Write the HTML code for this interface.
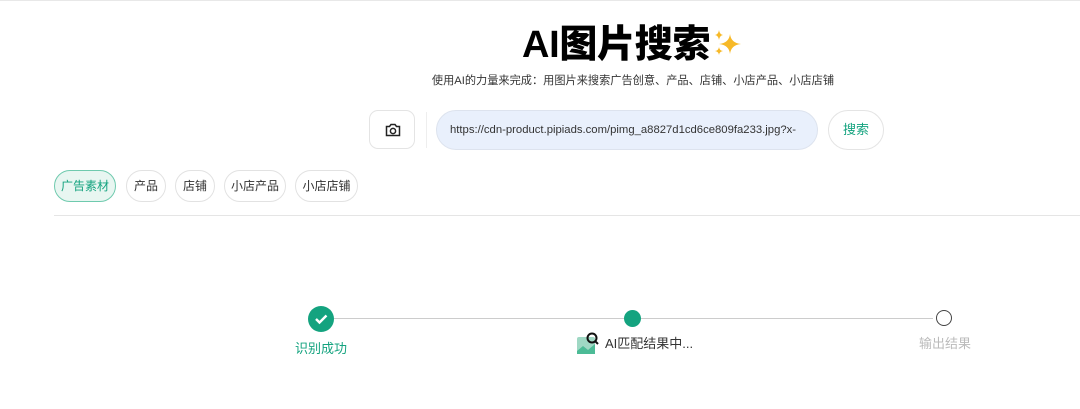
<!DOCTYPE html>
<html><head><meta charset="utf-8"><style>
body{margin:0;width:1080px;height:409px;background:#fff;font-family:"Liberation Sans","Noto Sans CJK SC",sans-serif;position:relative;overflow:hidden}
.a{position:absolute}
.topline{left:0;top:0;width:1080px;height:1px;background:#e8e8e8}
h1{position:absolute;left:522px;top:22px;margin:0;font-size:38px;font-weight:900;line-height:46px;color:#000;letter-spacing:-0.3px}
.sub{left:0;width:1266px;top:72px;text-align:center;font-size:11.2px;color:#333}
.cam{left:369px;top:110px;width:46px;height:39px;border:1px solid #e4e4e4;border-radius:9px;box-sizing:border-box}
.sep{left:426px;top:112px;width:1px;height:36px;background:#eee}
.inp{left:436px;top:110px;width:382px;height:40px;border:1px solid #dde3ee;background:#e9f0fc;border-radius:20px;box-sizing:border-box;font-size:11.3px;color:#333;line-height:38px;padding-left:13px;white-space:nowrap;overflow:hidden}
.inp span{display:block;width:346px;overflow:hidden;white-space:nowrap}
.btn{left:828px;top:110px;width:56px;height:40px;border:1px solid #e4e4e4;border-radius:20px;box-sizing:border-box;font-size:13px;color:#14a37f;text-align:center;line-height:38px}
.tag{top:170px;height:32px;border:1px solid #e2e2e2;border-radius:16px;box-sizing:border-box;font-size:12px;color:#333;line-height:30px;text-align:center}
.hr{left:54px;top:215px;width:1026px;height:1px;background:#e5e5e5}
.line{top:318px;height:1px;background:#ccc}
</style></head><body>
<div class="a topline"></div>
<h1>AI图片搜索</h1>
<svg class="a" style="left:710px;top:26px" width="34" height="34" viewBox="0 0 34 34"><path d="M20 8 Q21 17 31 18 Q21 19 20 28 Q19 19 9 18 Q19 17 20 8Z" fill="#f7b928"/><path d="M9 4 Q9.6 8.4 13 9 Q9.6 9.6 9 14 Q8.4 9.6 5 9 Q8.4 8.4 9 4Z" fill="#f7b928"/><path d="M9 21 Q9.5 24.5 13 25 Q9.5 25.5 9 29 Q8.5 25.5 5 25 Q8.5 24.5 9 21Z" fill="#f7b928"/></svg>
<div class="a sub">使用AI的力量来完成：用图片来搜索广告创意、产品、店铺、小店产品、小店店铺</div>
<div class="a cam"><svg style="position:absolute;left:15px;top:12px" width="16" height="14" viewBox="0 0 16 14"><path d="M1.5 3.5h3l1.5-2h4l1.5 2h3v9h-13z" fill="none" stroke="#222" stroke-width="1.5"/><circle cx="8" cy="8" r="2.6" fill="none" stroke="#222" stroke-width="1.5"/></svg></div>
<div class="a sep"></div>
<div class="a inp"><span>https://cdn-product.pipiads.com/pimg_a8827d1cd6ce809fa233.jpg?x-oss-process</span></div>
<div class="a btn">搜索</div>
<div class="a tag" style="left:54px;width:62px;background:#e8f6f1;border-color:#6fcaae;color:#14a37f">广告素材</div>
<div class="a tag" style="left:126px;width:40px">产品</div>
<div class="a tag" style="left:175px;width:40px">店铺</div>
<div class="a tag" style="left:224px;width:62px">小店产品</div>
<div class="a tag" style="left:295px;width:63px">小店店铺</div>
<div class="a hr"></div>
<div class="a line" style="left:333px;width:600px"></div>
<div class="a" style="left:308px;top:306px;width:26px;height:26px;border-radius:50%;background:#14a37f"><svg width="26" height="26"><path d="M8 13l3.5 3.5 7-7" fill="none" stroke="#fff" stroke-width="2.4"/></svg></div>
<div class="a" style="left:295px;top:338px;font-size:13px;color:#14a37f">识别成功</div>
<div class="a" style="left:624px;top:310px;width:17px;height:17px;border-radius:50%;background:#14a37f"></div>
<svg class="a" style="left:576px;top:331px" width="26" height="24"><rect x="1" y="6" width="18" height="17" rx="2" fill="#9fd8c4"/><path d="M1 20l6-5 5 4 7-6v10H1z" fill="#4cbb96"/><circle cx="16" cy="7" r="4.5" fill="none" stroke="#111" stroke-width="2"/><path d="M19 10l3 3" stroke="#111" stroke-width="2"/></svg>
<div class="a" style="left:605px;top:333px;font-size:13px;color:#333">AI匹配结果中...</div>
<div class="a" style="left:936px;top:310px;width:16px;height:16px;border-radius:50%;border:1px solid #444;box-sizing:border-box;background:#fff"></div>
<div class="a" style="left:919px;top:333px;font-size:13px;color:#bbb">输出结果</div>
</body></html>
